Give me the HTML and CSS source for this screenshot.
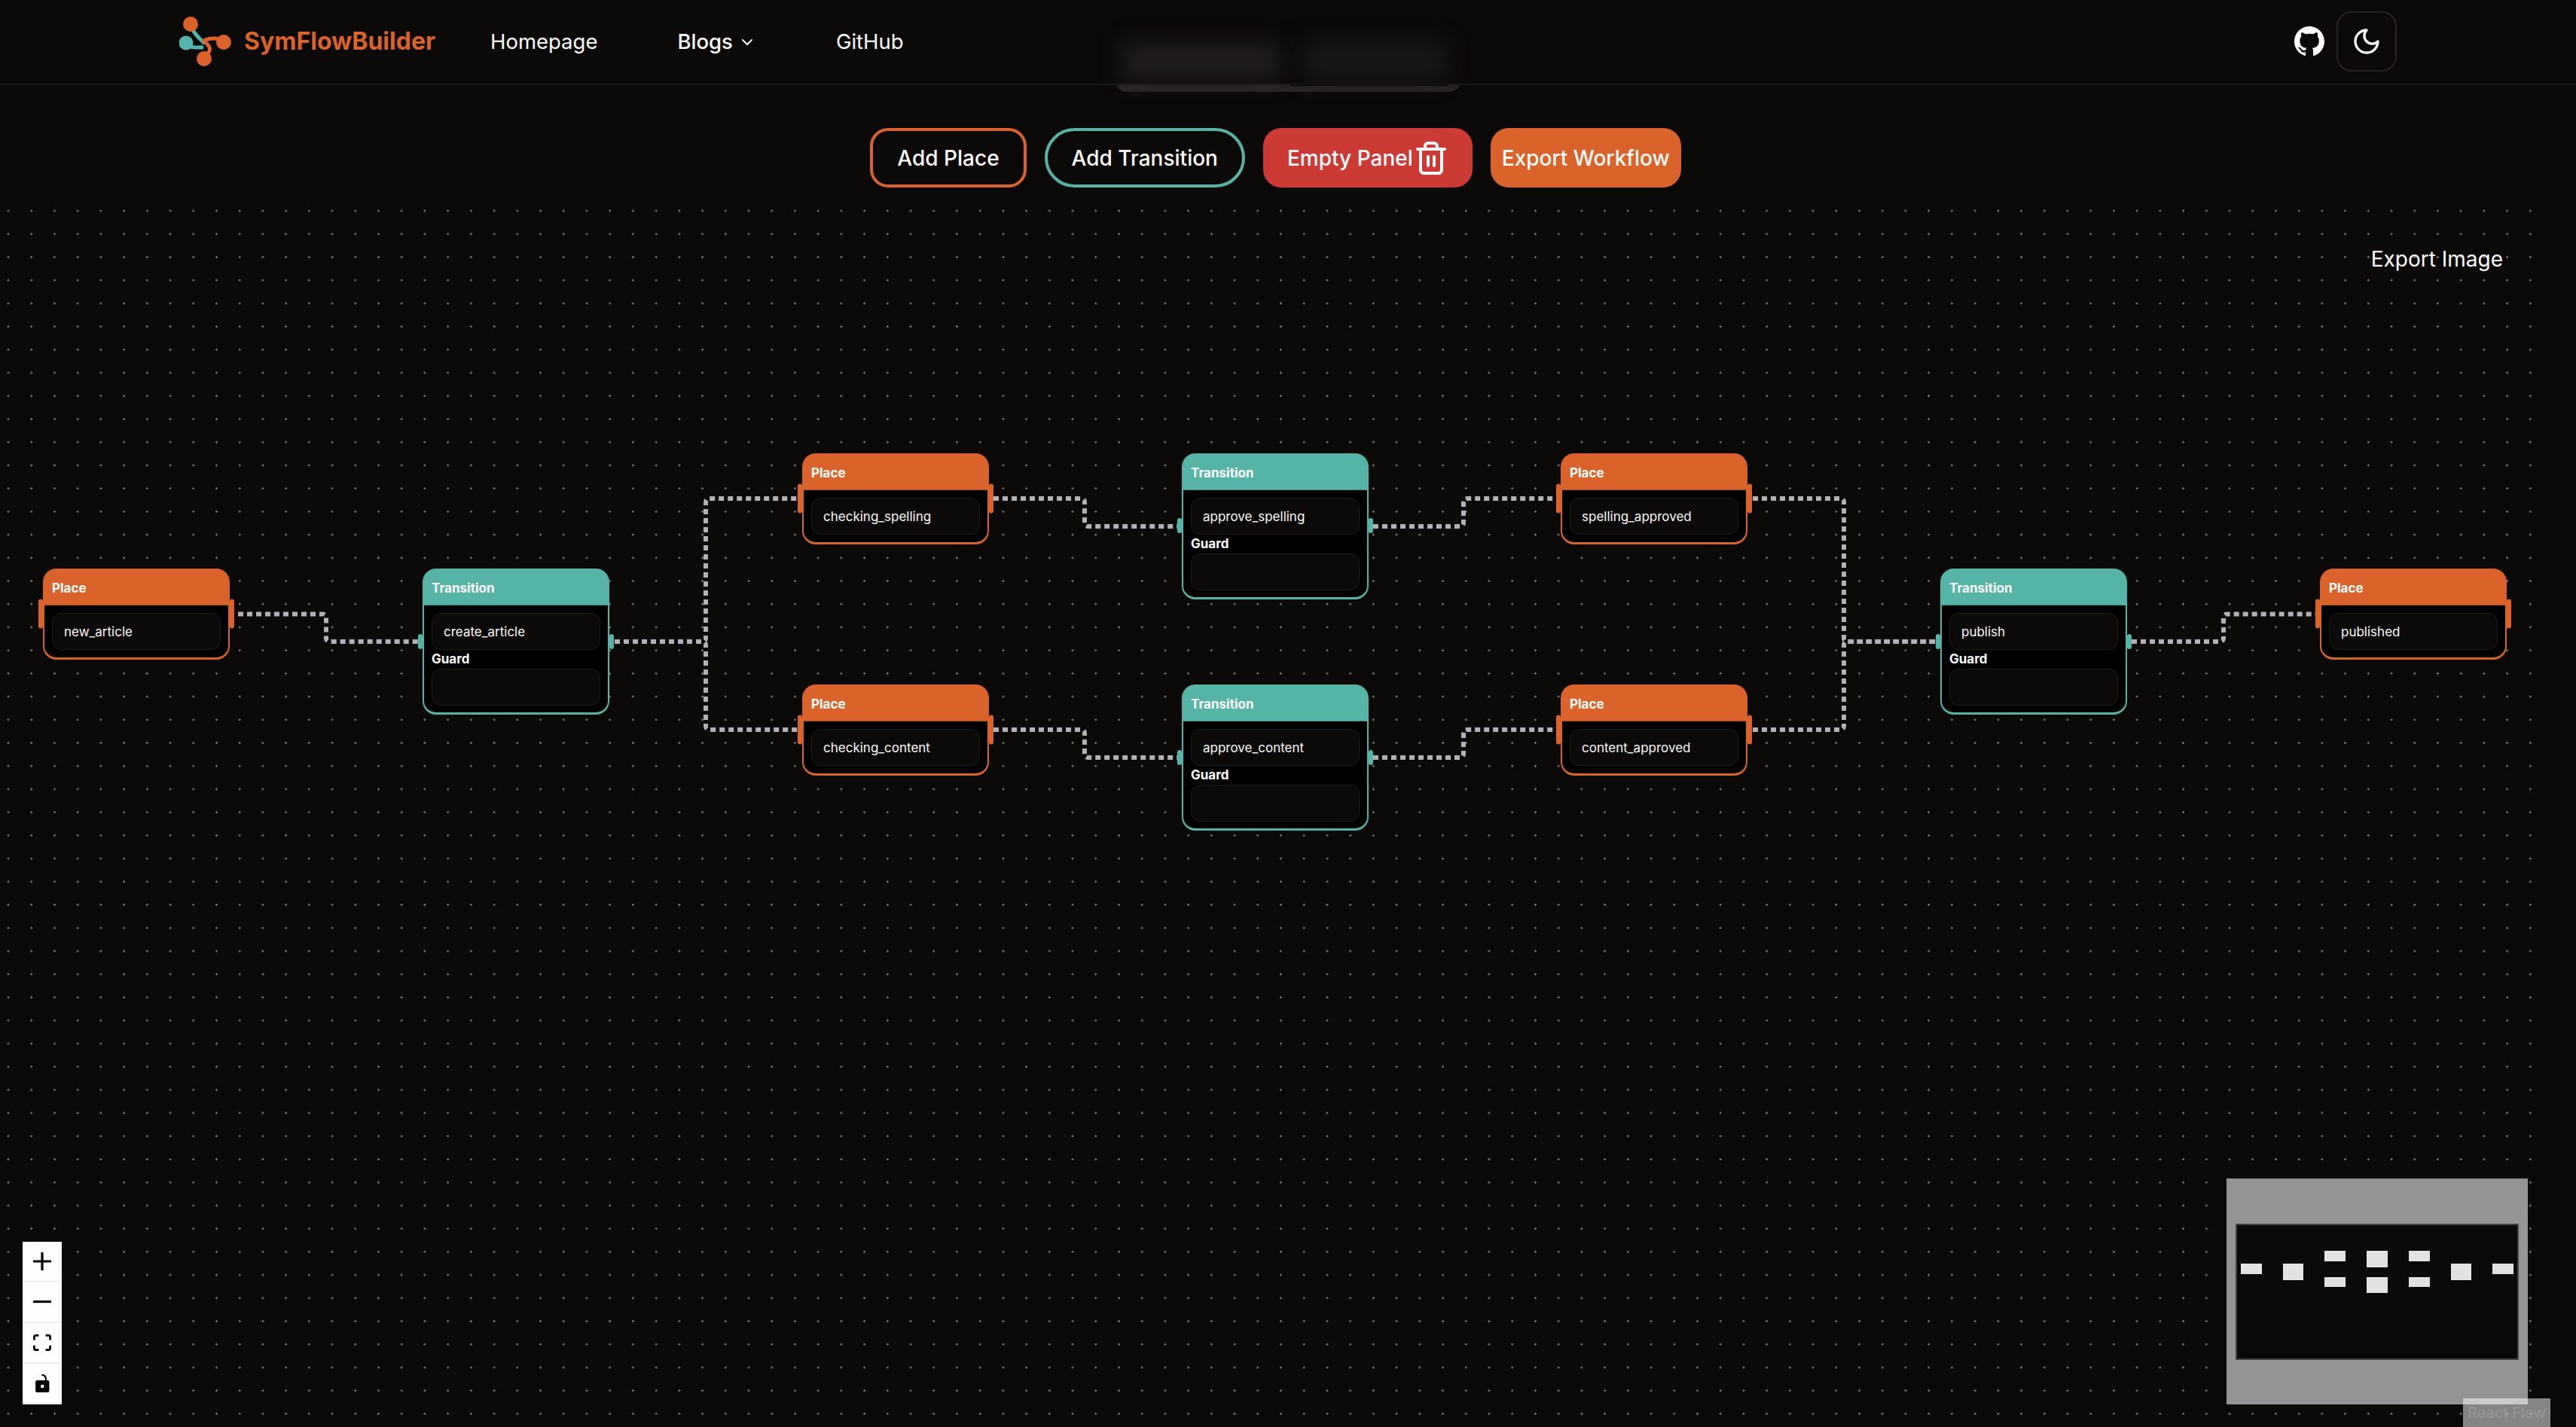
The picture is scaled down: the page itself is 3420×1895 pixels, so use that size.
FILE: index.html
```html
<!DOCTYPE html>
<html lang="en">
<head>
  <meta charset="UTF-8">
  <meta name="viewport" content="width=device-width, initial-scale=1.0">
  <title>SymFlowBuilder</title>
  <link rel="stylesheet" href="styles.css">
</head>
<body>

  <!-- Page content sliding under the nav, only its blurred edge shows -->
  <div class="peek"></div>
  <div class="peek-line"></div>

  <nav class="navbar">
    <div class="peek-blur peek-blur-left"></div>
    <div class="peek-blur peek-blur-right"></div>

    <a class="brand">
      <svg class="logo" viewBox="0 0 72 66" fill="none">
        <path d="M16 12 C18 22 26 28 34 36" stroke="#55b5ae" stroke-width="5"/>
        <path d="M8 35 C12 42 20 41 32 41" stroke="#55b5ae" stroke-width="5"/>
        <path d="M60 32 C52 28 40 28 33 32 C38 38 42 40 40 46 C38 50 36 52 34 54" stroke="#d9632a" stroke-width="5"/>
        <circle cx="15" cy="10" r="10" fill="#d9632a"/>
        <circle cx="9" cy="35" r="9.5" fill="#55b5ae"/>
        <circle cx="59" cy="34" r="10" fill="#d9632a"/>
        <circle cx="33" cy="56" r="10" fill="#d9632a"/>
      </svg>
      <span class="brand-name">SymFlowBuilder</span>
    </a>

    <div class="nav-links">
      <a class="nav-link">Homepage</a>
      <a class="nav-link nav-link-menu">Blogs
        <svg class="chevron" viewBox="0 0 24 24" fill="none" stroke="currentColor" stroke-width="2" stroke-linecap="round" stroke-linejoin="round"><path d="m6 9 6 6 6-6"/></svg>
      </a>
      <a class="nav-link">GitHub</a>
    </div>

    <div class="nav-actions">
      <svg class="github" viewBox="0 0 16 16" fill="#fafaf9"><path d="M8 0C3.58 0 0 3.58 0 8c0 3.54 2.29 6.53 5.47 7.59.4.07.55-.17.55-.38 0-.19-.01-.82-.01-1.49-2.01.37-2.53-.49-2.69-.94-.09-.23-.48-.94-.82-1.13-.28-.15-.68-.52-.01-.53.63-.01 1.08.58 1.23.82.72 1.21 1.87.87 2.33.66.07-.52.28-.87.51-1.07-1.78-.2-3.64-.89-3.64-3.95 0-.87.31-1.59.82-2.15-.08-.2-.36-1.02.08-2.12 0 0 .67-.21 2.2.82.64-.18 1.32-.27 2-.27.68 0 1.36.09 2 .27 1.53-1.04 2.2-.82 2.2-.82.44 1.1.16 1.92.08 2.12.51.56.82 1.27.82 2.15 0 3.07-1.87 3.75-3.65 3.95.29.25.54.73.54 1.48 0 1.07-.01 1.93-.01 2.2 0 .21.15.46.55.38A8.013 8.013 0 0016 8c0-4.42-3.58-8-8-8z"/></svg>
      <button class="theme-toggle">
        <svg class="moon" viewBox="0 0 24 24" fill="none" stroke="currentColor" stroke-width="2" stroke-linecap="round" stroke-linejoin="round"><path d="M12 3a6 6 0 0 0 9 9 9 9 0 1 1-9-9Z"/></svg>
      </button>
    </div>
  </nav>

  <main class="main">
    <div class="toolbar">
      <button class="btn btn-place">Add Place</button>
      <button class="btn btn-transition">Add Transition</button>
      <button class="btn btn-empty">Empty Panel
        <svg class="trash" viewBox="0 0 24 24" fill="none" stroke="currentColor" stroke-width="2" stroke-linecap="round" stroke-linejoin="round"><path d="M3 6h18"/><path d="M19 6v14c0 1-1 2-2 2H7c-1 0-2-1-2-2V6"/><path d="M8 6V4c0-1 1-2 2-2h4c1 0 2 1 2 2v2"/><path d="M10 11v6"/><path d="M14 11v6"/></svg>
      </button>
      <button class="btn btn-export">Export Workflow</button>
    </div>

    <section class="canvas">
      <svg class="edges" viewBox="0 0 3387 1630" fill="none">
        <path d="M316 550.5H428Q433 550.5 433 555.5V582Q433 587 438 587H555"/>
        <path d="M816 587H932Q937 587 937 582V402Q937 397 942 397H1059"/>
        <path d="M816 587H932Q937 587 937 592V699Q937 704 942 704H1059"/>
        <path d="M1319 397H1435Q1440 397 1440 402V429Q1440 434 1445 434H1563"/>
        <path d="M1319 704H1435Q1440 704 1440 709V736Q1440 741 1445 741H1563"/>
        <path d="M1823 434H1938Q1943 434 1943 429V402Q1943 397 1948 397H2066"/>
        <path d="M1823 741H1938Q1943 741 1943 736V709Q1943 704 1948 704H2066"/>
        <path d="M2327 397H2443Q2448 397 2448 402V582Q2448 587 2453 587H2570"/>
        <path d="M2327 704H2443Q2448 704 2448 699V592Q2448 587 2453 587H2570"/>
        <path d="M2830 587H2947Q2952 587 2952 582V555.5Q2952 550.5 2957 550.5H3074"/>
      </svg>

      <div class="node place col-1 row-mid">
        <span class="handle handle-left"></span><span class="handle handle-right"></span>
        <div class="node-header">Place</div>
        <div class="node-body"><div class="field">new_article</div></div>
      </div>
      <div class="node transition col-2 row-mid">
        <span class="handle handle-left"></span><span class="handle handle-right"></span>
        <div class="node-header">Transition</div>
        <div class="node-body"><div class="field">create_article</div><div class="guard-label">Guard</div><div class="field"></div></div>
      </div>
      <div class="node place col-3 row-top">
        <span class="handle handle-left"></span><span class="handle handle-right"></span>
        <div class="node-header">Place</div>
        <div class="node-body"><div class="field">checking_spelling</div></div>
      </div>
      <div class="node place col-3 row-bottom">
        <span class="handle handle-left"></span><span class="handle handle-right"></span>
        <div class="node-header">Place</div>
        <div class="node-body"><div class="field">checking_content</div></div>
      </div>
      <div class="node transition col-4 row-top">
        <span class="handle handle-left"></span><span class="handle handle-right"></span>
        <div class="node-header">Transition</div>
        <div class="node-body"><div class="field">approve_spelling</div><div class="guard-label">Guard</div><div class="field"></div></div>
      </div>
      <div class="node transition col-4 row-bottom">
        <span class="handle handle-left"></span><span class="handle handle-right"></span>
        <div class="node-header">Transition</div>
        <div class="node-body"><div class="field">approve_content</div><div class="guard-label">Guard</div><div class="field"></div></div>
      </div>
      <div class="node place col-5 row-top">
        <span class="handle handle-left"></span><span class="handle handle-right"></span>
        <div class="node-header">Place</div>
        <div class="node-body"><div class="field">spelling_approved</div></div>
      </div>
      <div class="node place col-5 row-bottom">
        <span class="handle handle-left"></span><span class="handle handle-right"></span>
        <div class="node-header">Place</div>
        <div class="node-body"><div class="field">content_approved</div></div>
      </div>
      <div class="node transition col-6 row-mid">
        <span class="handle handle-left"></span><span class="handle handle-right"></span>
        <div class="node-header">Transition</div>
        <div class="node-body"><div class="field">publish</div><div class="guard-label">Guard</div><div class="field"></div></div>
      </div>
      <div class="node place col-7 row-mid">
        <span class="handle handle-left"></span><span class="handle handle-right"></span>
        <div class="node-header">Place</div>
        <div class="node-body"><div class="field">published</div></div>
      </div>

      <button class="export-image">Export Image</button>

      <div class="controls">
        <button class="control"><svg class="icon-plus" viewBox="0 0 32 32"><path d="M32 18.133H18.133V32h-4.266V18.133H0v-4.266h13.867V0h4.266v13.867H32z"/></svg></button>
        <button class="control"><svg class="icon-minus" viewBox="0 0 32 5"><path d="M0 0h32v4.2H0z"/></svg></button>
        <button class="control"><svg class="icon-fit" viewBox="0 0 32 30"><path d="M3.692 4.63c0-.53.4-.938.939-.938h5.215V0H4.708C2.13 0 0 2.054 0 4.63v5.216h3.692V4.631zM27.354 0h-5.2v3.692h5.17c.53 0 .984.4.984.939v5.215H32V4.631A4.624 4.624 0 0027.354 0zm.954 24.83c0 .532-.4.94-.939.94h-5.215v3.768h5.215c2.577 0 4.631-2.13 4.631-4.707v-5.139h-3.692v5.139zm-23.677.94c-.531 0-.939-.4-.939-.94v-5.138H0v5.139c0 2.577 2.13 4.707 4.708 4.707h5.138V25.77H4.631z"/></svg></button>
        <button class="control"><svg class="icon-lock" viewBox="0 0 25 32"><path d="M21.333 10.667H19.81V7.619C19.81 3.429 16.38 0 12.19 0c-4.114 1.828-1.37 2.133.305 2.438 1.676.305 4.42 2.59 4.42 5.181v3.048H3.047A3.056 3.056 0 000 13.714v15.238A3.056 3.056 0 003.048 32h18.285a3.056 3.056 0 003.048-3.048V13.714a3.056 3.056 0 00-3.048-3.047zM12.19 24.533a3.056 3.056 0 01-3.047-3.047 3.056 3.056 0 013.047-3.048 3.056 3.056 0 013.048 3.048 3.056 3.056 0 01-3.048 3.047z"/></svg></button>
      </div>

      <svg class="minimap" viewBox="0 0 400 300">
        <rect class="mini-mask" width="400" height="300"/>
        <rect class="mini-view" x="13" y="61" width="374" height="179"/>
        <g class="mini-nodes">
          <rect x="19" y="113" width="28" height="14"/>
          <rect x="75" y="113" width="27" height="22"/>
          <rect x="130" y="96" width="28" height="14"/>
          <rect x="130" y="131" width="28" height="13"/>
          <rect x="186" y="96" width="28" height="22"/>
          <rect x="186" y="131" width="28" height="21"/>
          <rect x="242" y="96" width="28" height="14"/>
          <rect x="242" y="131" width="28" height="13"/>
          <rect x="298" y="113" width="27" height="22"/>
          <rect x="353" y="113" width="28" height="14"/>
        </g>
      </svg>

      <a class="attribution">React Flow</a>
    </section>
  </main>

</body>
</html>
```

FILE: styles.css
```css
* {
  box-sizing: border-box;
}
html, body {
  height: 100%;
}
body {
  margin: 0;
  overflow: hidden;
  background-color: #0c0a09;
  color: #fafaf9;
  font-family: Inter, "Liberation Sans", sans-serif;
  display: flex;
  flex-direction: column;
}
button {
  font-family: inherit;
  cursor: pointer;
}

/* nav */
.navbar {
  position: relative;
  z-index: 2;
  flex: none;
  height: 113px;
  display: flex;
  align-items: center;
  padding: 0 238px 2px 238px;
  background: #0c0a09;
  border-bottom: 2px solid #1c1917;
}
.brand {
  display: flex;
  align-items: center;
  gap: 14px;
}
.logo {
  width: 72px;
  height: 66px;
  filter: blur(0.7px);
}
.brand-name {
  font-size: 32px;
  font-weight: 700;
  color: #d9632a;
}
.nav-links {
  display: flex;
  align-items: center;
  gap: 106px;
  margin-left: 73px;
}
.nav-link {
  font-size: 27.5px;
  color: #fafaf9;
}
.nav-link-menu {
  display: flex;
  align-items: center;
  gap: 7px;
  font-weight: 500;
}
.chevron {
  width: 24px;
  height: 24px;
  margin-top: 2px;
}
.nav-actions {
  display: flex;
  align-items: center;
  gap: 16px;
  margin-left: auto;
}
.github {
  width: 40px;
  height: 40px;
}
.theme-toggle {
  width: 80px;
  height: 80px;
  display: flex;
  align-items: center;
  justify-content: center;
  background: #0c0a09;
  color: #fafaf9;
  border: 2px solid #292524;
  border-radius: 20px;
}
.moon {
  width: 40px;
  height: 40px;
}

/* blurred content behind the nav */
.peek {
  position: absolute;
  left: 1480px;
  top: 100px;
  width: 460px;
  height: 22px;
  background: #292524;
  border-radius: 0 0 16px 16px;
}
.peek-line {
  position: absolute;
  z-index: 3;
  left: 1713px;
  top: 112px;
  width: 210px;
  height: 2px;
  background: #0c0a09;
}
.peek-blur {
  position: absolute;
  top: 56px;
  height: 50px;
  background: #1f1d1b;
  filter: blur(14px);
}
.peek-blur-left {
  left: 1490px;
  width: 210px;
}
.peek-blur-right {
  left: 1730px;
  width: 190px;
  background: #1a1917;
}

/* toolbar */
.main {
  flex: 1;
  width: 3387px;
  min-height: 0;
  display: flex;
  flex-direction: column;
}
.toolbar {
  flex: none;
  display: flex;
  justify-content: center;
  gap: 24px;
  padding: 57px 0 16px 0;
}
.btn {
  height: 79px;
  display: flex;
  align-items: center;
  font-size: 28px;
  font-weight: 500;
  color: #fafaf9;
  background: #0c0a09;
  border: 4px solid transparent;
}
.btn-place {
  padding: 0 32px;
  border-color: #d9632a;
  border-radius: 24px;
}
.btn-transition {
  padding: 0 32px;
  border-color: #56b4a6;
  border-radius: 40px;
}
.btn-empty {
  padding: 0 27px 0 28px;
  background: #cb3a35;
  border-radius: 24px;
}
.trash {
  width: 48px;
  height: 48px;
}
.btn-export {
  padding: 0 11px;
  background: #d9632a;
  border-radius: 24px;
}

/* canvas */
.canvas {
  position: relative;
  flex: 1;
  min-height: 0;
  background-image: radial-gradient(circle, #7f7f86 1px, transparent 1.5px);
  background-size: 30.72px 30.72px;
  background-position: -4.36px -0.36px;
}
.edges {
  position: absolute;
  left: 0;
  top: 0;
  width: 3387px;
  height: 1630px;
}
.edges path {
  stroke: #b1b1b7;
  stroke-width: 6;
  stroke-dasharray: 7 5;
}
.export-image {
  position: absolute;
  right: 64px;
  top: 62px;
  padding: 0;
  border: none;
  background: none;
  font-size: 28px;
  color: #fafaf9;
}

/* nodes */
.node {
  position: absolute;
  width: 248px;
  border: 2px solid;
  border-bottom-width: 3px;
  border-radius: 18px;
  background: #000;
}
.place {
  border-color: #d9632a;
}
.transition {
  border-color: #56b4a6;
}
.col-1 { left: 57px; }
.col-2 { left: 561px; }
.col-3 { left: 1065px; }
.col-4 { left: 1569px; }
.col-5 { left: 2072px; }
.col-6 { left: 2576px; }
.col-7 { left: 3080px; }
.row-top { top: 336.5px; }
.row-mid { top: 490px; }
.row-bottom { top: 644px; }

.node-header {
  height: 48px;
  padding: 9px 0 0 10px;
  margin: -1px 0 0 0;
  font-size: 17px;
  line-height: 32px;
  font-weight: 700;
  color: #fff;
  border-radius: 15px 15px 0 0;
  border-bottom: 1px solid rgba(0, 0, 0, 0.2);
}
.place .node-header {
  background: #d9632a;
}
.transition .node-header {
  background: #56b4a6;
}
.node-body {
  padding: 10px 10px 10px 10px;
}
.transition .node-body {
  padding-bottom: 9px;
}
.field {
  height: 49px;
  padding: 1px 0 0 15px;
  display: flex;
  align-items: center;
  font-size: 17px;
  color: #fafaf9;
  background: #0c0a09;
  border: 1px solid #201d1b;
  border-radius: 12px;
}
.guard-label {
  height: 25px;
  line-height: 25px;
  font-size: 17px;
  font-weight: 700;
  color: #fff;
}
.handle {
  position: absolute;
  width: 6px;
  border-radius: 3px;
  transform: translateY(-50%);
  top: 50%;
}
.place .handle {
  height: 39px;
  background: #d9632a;
}
.transition .handle {
  height: 20px;
  background: #56b4a6;
}
.handle-left {
  left: -8px;
}
.handle-right {
  right: -8px;
}

/* react flow panels */
.controls {
  position: absolute;
  left: 30px;
  bottom: 30px;
  width: 52px;
  display: flex;
  flex-direction: column;
}
.control {
  height: 54px;
  padding: 0;
  display: flex;
  align-items: center;
  justify-content: center;
  background: #fefefe;
  border: none;
  border-bottom: 2px solid #eee;
}
.control svg {
  width: 24px;
  max-height: 24px;
  fill: #000;
}
.control .icon-lock {
  width: 19px;
}
.minimap {
  position: absolute;
  right: 31px;
  bottom: 30px;
  width: 400px;
  height: 300px;
}
.mini-mask {
  fill: #949494;
}
.mini-view {
  fill: #0c0a09;
  stroke: #444;
  stroke-width: 2;
}
.mini-nodes rect {
  fill: #e2e2e2;
}
.attribution {
  position: absolute;
  right: 1px;
  bottom: 0;
  height: 38px;
  width: 116px;
  display: flex;
  align-items: center;
  justify-content: center;
  font-size: 20px;
  color: #999;
  background: rgba(255, 255, 255, 0.5);
}
```
